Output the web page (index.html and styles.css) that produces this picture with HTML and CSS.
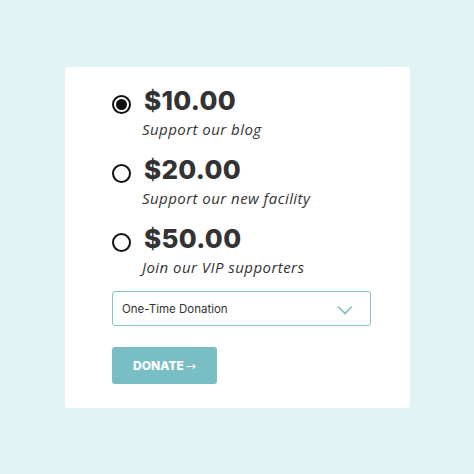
FILE: index.html
```html
<!DOCTYPE html>
<html>
<head>
<meta charset="utf-8">
<link rel="stylesheet" href="styles.css">
</head>
<body>
<div class="card">
  <div class="options">
    <label class="option">
      <span class="radio checked"></span>
      <span class="text">
        <span class="price">$10.00</span>
        <span class="sub">Support our blog</span>
      </span>
    </label>
    <label class="option">
      <span class="radio"></span>
      <span class="text">
        <span class="price">$20.00</span>
        <span class="sub">Support our new facility</span>
      </span>
    </label>
    <label class="option">
      <span class="radio"></span>
      <span class="text">
        <span class="price">$50.00</span>
        <span class="sub">Join our VIP supporters</span>
      </span>
    </label>
  </div>
  <div class="select">
    <span>One-Time Donation</span>
    <svg class="chev" width="16" height="10" viewBox="0 0 16 10"><path d="M1 1.5 L8 8.5 L15 1.5" fill="none" stroke="#7bbfc6" stroke-width="1.6"/></svg>
  </div>
  <button class="donate">DONATE <span class="arrow">→</span></button>
</div>
</body>
</html>
```
FILE: styles.css
```css
html, body {
  margin: 0;
  padding: 0;
}
body {
  background: #e2f3f4;
  width: 474px;
  height: 474px;
  font-family: "Inter", "Liberation Sans", sans-serif;
  color: #333;
}
.card {
  margin: 67px 0 0 65px;
  width: 345px;
  height: 341px;
  box-sizing: border-box;
  background: #fff;
  border-radius: 3px;
  padding: 19px 39px 0 47px;
}
.options {
  display: flex;
  flex-direction: column;
  gap: 15px;
}
.option {
  display: flex;
  align-items: flex-start;
  gap: 11px;
}
.radio {
  width: 19px;
  height: 19px;
  box-sizing: border-box;
  border: 2px solid #111;
  border-radius: 50%;
  margin-top: 9px;
  flex: none;
  display: flex;
  align-items: center;
  justify-content: center;
}
.radio.checked::after {
  content: "";
  width: 11px;
  height: 11px;
  border-radius: 50%;
  background: #111;
}
.text {
  display: flex;
  flex-direction: column;
}
.price {
  font-size: 26px;
  font-weight: 800;
  line-height: 30px;
  color: #333;
  letter-spacing: 0.3px;
  margin-left: 2px;
}
.sub {
  font-family: "Open Sans", sans-serif;
  font-style: italic;
  font-size: 15px;
  line-height: 22px;
  padding-top: 2px;
  letter-spacing: 0.45px;
  color: #333;
}
.select {
  margin-top: 13px;
  height: 35px;
  box-sizing: border-box;
  border: 1.5px solid #82c6ca;
  border-radius: 3px;
  display: flex;
  align-items: center;
  justify-content: space-between;
  padding: 0 17px 0 9px;
  font-size: 11.5px;
  color: #333;
}
.chev {
  margin-top: 2px;
}
.donate {
  margin-top: 21px;
  width: 105px;
  height: 37px;
  border: none;
  border-radius: 3px;
  background: #79bec5;
  color: #fff;
  font-family: "Inter", sans-serif;
  font-weight: 800;
  font-size: 12px;
  display: flex;
  align-items: center;
  justify-content: center;
  padding: 0;
  gap: 2px;
}
.arrow {
  font-weight: 400;
  font-family: "DejaVu Sans", sans-serif;
}
```
